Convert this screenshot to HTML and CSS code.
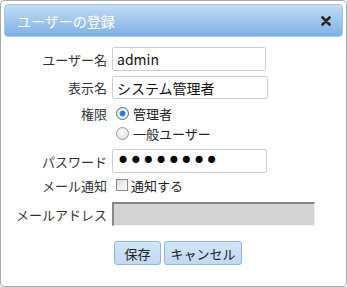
FILE: index.html
```html
<!DOCTYPE html>
<html lang="ja">
<head>
    <meta charset="UTF-8">
    <title>ユーザーの登録</title>
    <link rel="stylesheet" href="styles.css">
</head>
<body>
    <div class="dialog">
        <div class="titlebar">
            <span class="title">ユーザーの登録</span>
            <svg class="close" width="10" height="10" viewBox="0 0 10 10">
                <path d="M1.5 1.5 L8.5 8.5 M8.5 1.5 L1.5 8.5" stroke="#222" stroke-width="2.6" stroke-linecap="round"/>
            </svg>
        </div>
        <form class="form">
            <div class="row row-user">
                <label class="label">ユーザー名</label>
                <input class="field w154" type="text" value="admin">
            </div>
            <div class="row row-name">
                <label class="label">表示名</label>
                <input class="field w156" type="text" value="システム管理者">
            </div>
            <div class="row row-role">
                <label class="label">権限</label>
                <div class="options">
                    <label class="option"><input class="radio" type="radio" name="role" checked>管理者</label>
                    <label class="option"><input class="radio" type="radio" name="role">一般ユーザー</label>
                </div>
            </div>
            <div class="row row-pass">
                <label class="label">パスワード</label>
                <input class="field w155 pass" type="password" value="password">
            </div>
            <div class="row row-notify">
                <label class="label">メール通知</label>
                <label class="option"><input class="check" type="checkbox">通知する</label>
            </div>
            <div class="row row-mail">
                <label class="label">メールアドレス</label>
                <input class="field mail" type="text" disabled>
            </div>
            <div class="buttons">
                <button type="button" class="btn btn-save">保存</button>
                <button type="button" class="btn btn-cancel">キャンセル</button>
            </div>
        </form>
    </div>
</body>
</html>
```

FILE: styles.css
```css
body {
    margin: 0;
    background-color: #fff;
    font-family: "Noto Sans CJK JP", "Noto Sans", sans-serif;
    color: #333;
}

.dialog {
    box-sizing: border-box;
    width: 347px;
    height: 287px;
    border: 1px solid #aaa;
    border-radius: 4px;
    padding: 3px;
    background-color: #fff;
}

.titlebar {
    box-sizing: border-box;
    height: 33px;
    border: 1px solid #a6c8ec;
    border-radius: 4px;
    background: linear-gradient(#c3dcf4, #7eb0e6);
    display: flex;
    align-items: center;
    justify-content: space-between;
    padding: 0 11px 0 12px;
}

.title {
    color: #fff;
    font-size: 14px;
    line-height: 18px;
}

.close {
    display: block;
}

.form {
    margin: 10px 0 0 0;
}

.row {
    display: flex;
    align-items: center;
}

.label {
    width: 108px;
    padding-right: 5px;
    box-sizing: border-box;
    text-align: right;
    font-size: 13px;
    line-height: 17px;
    color: #333;
}

.field {
    box-sizing: border-box;
    height: 24px;
    margin: 0;
    padding: 0 4px;
    border: 1px solid #c9d0da;
    border-radius: 2px;
    font-family: "Noto Sans CJK JP", sans-serif;
    font-size: 14px;
    color: #111;
    background-color: #fff;
}

.w154 { width: 154px; }
.w155 { width: 155px; }
.w156 { width: 156px; height: 23px; }

.row-name { margin-top: 5px; }

.row-role {
    margin-top: 4px;
    align-items: flex-start;
}

.row-role .label {
    margin-top: 2px;
}

.options {
    display: flex;
    flex-direction: column;
}

.option {
    display: flex;
    align-items: center;
    height: 20px;
    font-size: 13px;
    color: #222;
}

.radio {
    appearance: none;
    -webkit-appearance: none;
    width: 13px;
    height: 13px;
    margin: 0 4px 0 4px;
    border: 1px solid #999;
    border-radius: 50%;
    background: radial-gradient(circle at 40% 35%, #fff, #d8d8d8);
    box-sizing: border-box;
}

.radio:checked {
    border-color: #4a6e8e;
    background: radial-gradient(circle, #1f77c6 0, #2b8ad8 2.5px, #fff 3.5px, #dde6ee 6px);
}

.row-pass { margin-top: 6px; }

.pass {
    font-family: "DejaVu Sans", sans-serif;
    font-size: 24px;
    letter-spacing: -1.5px;
    padding-left: 3px;
    color: #000;
}

.row-notify { margin-top: 2px; height: 20px; }

.check {
    appearance: none;
    -webkit-appearance: none;
    width: 12px;
    height: 12px;
    margin: 0 3px 0 4px;
    border: 1px solid #8a8a8a;
    background: linear-gradient(135deg, #dcdcdc, #fafafa);
    box-sizing: border-box;
}

.row-mail { margin-top: 7px; }

.mail {
    width: 203px;
    border-width: 2px 1px 1px 2px;
    border-style: solid;
    border-color: #888 #f2f2f2 #f2f2f2 #888;
    border-radius: 0;
    background-color: #d3d3d3;
}

.buttons {
    display: flex;
    gap: 3px;
    margin: 15px 0 0 110px;
}

.btn {
    box-sizing: border-box;
    height: 24px;
    padding: 0;
    border: 1px solid #8cb8e8;
    border-radius: 3px;
    background: linear-gradient(#d3e5f8, #c0d9f3);
    font-family: "Noto Sans CJK JP", sans-serif;
    font-size: 13px;
    color: #222;
}

.btn-save { width: 47px; }
.btn-cancel { width: 78px; }
```
